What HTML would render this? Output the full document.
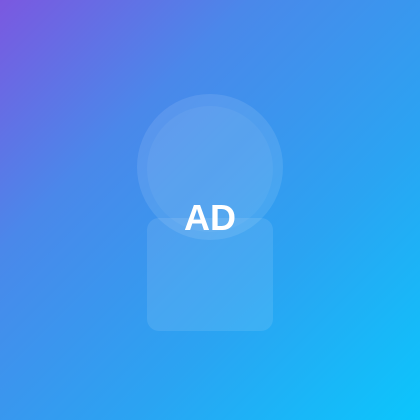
<!DOCTYPE html>
<html><head><style>
html,body{margin:0;padding:0}
body{width:420px;height:420px;overflow:hidden;position:relative;background:linear-gradient(135deg,#7b58e0 0%,#4a88ea 30%,#2ba3f2 65%,#0bc6fc 100%);font-family:"Liberation Sans",sans-serif}
.c1{position:absolute;left:137px;top:94px;width:146px;height:146px;border-radius:50%;background:rgba(255,255,255,0.1)}
.c2{position:absolute;left:147px;top:106px;width:126px;height:126px;border-radius:50%;background:rgba(255,255,255,0.05)}
.r{position:absolute;left:147px;top:218px;width:126px;height:113px;border-radius:12px;background:rgba(255,255,255,0.1)}
.t{position:absolute;left:0;width:420px;top:198px;text-align:center;color:#fff;font-weight:bold;font-size:36px;line-height:40px}
</style></head><body>
<div class="c1"></div><div class="c2"></div><div class="r"></div>
<div class="t">AD</div>
</body></html>
